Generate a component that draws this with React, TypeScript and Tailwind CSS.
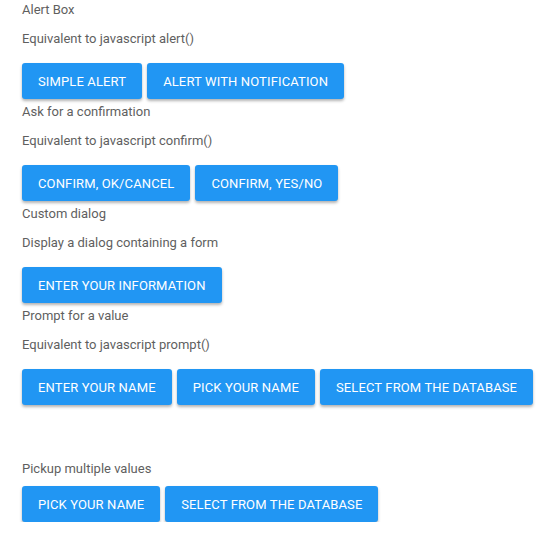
const sections = [
  { title: 'Alert Box', sub: 'Equivalent to javascript alert()', buttons: ['Simple alert', 'Alert with notification'] },
  { title: 'Ask for a confirmation', sub: 'Equivalent to javascript confirm()', buttons: ['Confirm, OK/Cancel', 'Confirm, Yes/No'] },
  { title: 'Custom dialog', sub: 'Display a dialog containing a form', buttons: ['Enter your information'] },
  { title: 'Prompt for a value', sub: 'Equivalent to javascript prompt()', buttons: ['Enter your name', 'Pick your name', 'Select from the database'] },
]

function Btn({ label }: { label: string }) {
  return (
    <button className="h-9 px-4 pt-px shrink-0 whitespace-nowrap rounded-[3px] bg-[#2196f3] text-white text-[13px] font-normal tracking-[0.13px] uppercase shadow-[0_2px_3px_rgba(0,0,0,0.3)]">
      {label}
    </button>
  )
}

export default function App() {
  return (
    <div className="px-[22px] text-[13px] text-[#5f5f5f]" style={{ fontFamily: 'Roboto, sans-serif' }}>
      {sections.map((s, i) => (
        <div key={i} className={`flex flex-col ${i === 0 ? '' : 'mt-[3px]'}`}>
          <div className="h-5 leading-5">{s.title}</div>
          <div className="h-5 leading-5 mt-[9px]">{s.sub}</div>
          <div className="flex gap-[5px] mt-[14px]">
            {s.buttons.map((b) => (
              <Btn key={b} label={b} />
            ))}
          </div>
        </div>
      ))}
      <div className="flex flex-col mt-[54px]">
        <div className="h-5 leading-5">Pickup multiple values</div>
        <div className="flex gap-[5px] mt-[7px]">
          <Btn label="Pick your name" />
          <Btn label="Select from the database" />
        </div>
      </div>
    </div>
  )
}
